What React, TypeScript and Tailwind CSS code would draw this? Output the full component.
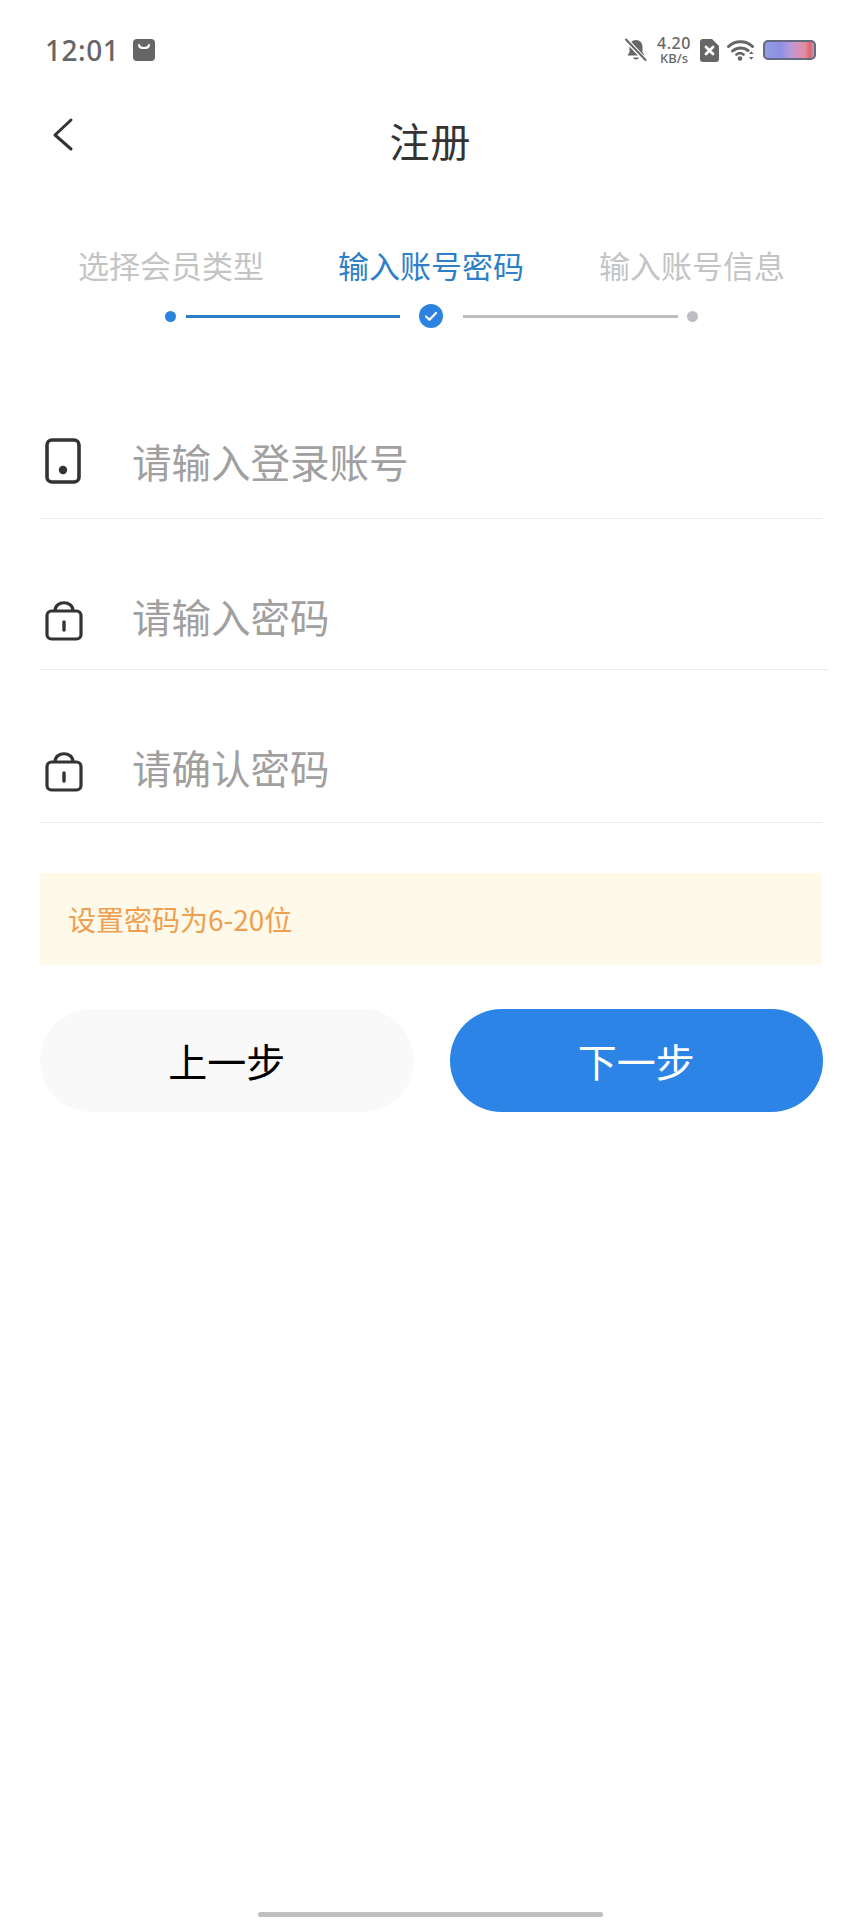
import React from "react";

const CJK = "font-['Noto_Sans_CJK_SC','Noto_Sans',sans-serif]";

const Bag = () => (
  <svg width="22" height="22" viewBox="0 0 22 22">
    <rect width="22" height="22" rx="4" fill="#666" />
    <path d="M6 6c.5 4 9.5 4 10 0" fill="none" stroke="#fff" strokeWidth="2.2" strokeLinecap="round" />
  </svg>
);

const BellOff = () => (
  <svg width="22" height="24" viewBox="0 0 22 24">
    <path d="M11 2c4 0 6.5 3 6.5 7v5l2 3.5H2.5L4.500 14V9c0-4 2.500-7 6.500-7z" fill="#666" />
    <path d="M8 19.500c.5 2.500 5.500 2.500 6 0z" fill="#666" />
    <path d="M1.500 2L20 22" stroke="#fff" strokeWidth="4.500" />
    <path d="M1 1.500L20.500 22" stroke="#666" strokeWidth="2" strokeLinecap="round" />
  </svg>
);

const SimOff = () => (
  <svg width="19" height="23" viewBox="0 0 19 23">
    <path d="M3 0h9l7 7v13a3 3 0 0 1-3 3H3a3 3 0 0 1-3-3V3a3 3 0 0 1 3-3z" fill="#666" />
    <path d="M6 8l7 7M13 8l-7 7" stroke="#fff" strokeWidth="2.800" strokeLinecap="round" />
  </svg>
);

const Wifi = () => (
  <svg width="28" height="22" viewBox="0 0 28 22">
    <path d="M1.500 7.500C8 1 19 1 25.500 7.500" fill="none" stroke="#666" strokeWidth="3" strokeLinecap="round" />
    <path d="M5.500 12c4.500-4 11.500-4 15.500-.5" fill="none" stroke="#666" strokeWidth="3" strokeLinecap="round" />
    <path d="M9.500 15.500c2-1.500 5-1.500 7 0" fill="none" stroke="#666" strokeWidth="2.800" strokeLinecap="round" />
    <circle cx="13" cy="19.500" r="2.300" fill="#666" />
    <path d="M22 15l2.300-2.800 2.300 2.800zM22 18l2.300 2.800 2.300-2.800z" fill="#666" />
  </svg>
);

const Battery = () => (
  <div className="w-[53px] h-[20px] rounded-[5px] border-[2px] border-[#666a80] bg-[linear-gradient(90deg,#8f9ee0_0%,#8d8fe6_30%,#b79ad8_52%,#df8fb4_72%,#dc8f9c_82%,#e0606e_92%,#b4a0b8_100%)]" />
);

const PhoneIcon = () => (
  <svg width="36" height="46" viewBox="0 0 36 46">
    <rect x="2" y="2" width="32" height="42" rx="5" fill="none" stroke="#333" strokeWidth="3.600" />
    <circle cx="18" cy="32" r="4.200" fill="#333" />
  </svg>
);

const LockIcon = () => (
  <svg width="38" height="40" viewBox="0 0 38 40">
    <rect x="2" y="10" width="34" height="28" rx="4.500" fill="none" stroke="#333" strokeWidth="3.200" />
    <path d="M10 10c0-11 18-11 18 0" fill="none" stroke="#333" strokeWidth="3.200" />
    <path d="M19 21v8" stroke="#333" strokeWidth="3.400" strokeLinecap="round" />
  </svg>
);

const StepCheck = () => (
  <svg width="24" height="24" viewBox="0 0 24 24">
    <circle cx="12" cy="12" r="12" fill="#2b82e0" />
    <path d="M7 12.500l3.500 3.300L17 9" fill="none" stroke="#fff" strokeWidth="2.200" strokeLinecap="round" strokeLinejoin="round" />
  </svg>
);

const fields = [
  { icon: <PhoneIcon />, label: "请输入登录账号", rowClass: "h-[150px] w-[782px] pb-[29px]", iconBox: "mb-[5px]" },
  { icon: <LockIcon />, label: "请输入密码", rowClass: "h-[151px] w-[788px] pb-[25px]", iconBox: "mb-[3px]" },
  { icon: <LockIcon />, label: "请确认密码", rowClass: "h-[153px] w-[782px] pb-[27px]", iconBox: "mb-[3px]" },
];

export default function App() {
  return (
    <div className={`w-[861px] h-[1920px] bg-white flex flex-col ${CJK}`}>
      {/* Status bar */}
      <div className="h-[100px] pl-[45px] pr-[45px] flex items-center justify-between">
        <div className="flex items-center gap-[14px]">
          <span className="text-[28px] leading-[32px] font-medium tracking-[0.5px] text-[#666] font-['Noto_Sans',sans-serif]">12:01</span>
          <Bag />
        </div>
        <div className="flex items-center">
          <BellOff />
          <div className="ml-[8px] w-[38px] flex flex-col items-center text-[#666] font-['Noto_Sans',sans-serif] font-medium">
            <span className="text-[16px] leading-[17px] tracking-[0.5px]">4.20</span>
            <span className="text-[13px] leading-[13px]">KB/s</span>
          </div>
          <div className="ml-[7px]"><SimOff /></div>
          <div className="ml-[8px]"><Wifi /></div>
          <div className="ml-[8px]"><Battery /></div>
        </div>
      </div>

      {/* Title bar */}
      <div className="relative h-[80px] flex items-center justify-center">
        <svg className="absolute left-[50px] top-[16px]" width="26" height="36" viewBox="0 0 26 36">
          <path d="M21 4L5 19l16 14" fill="none" stroke="#333" strokeWidth="3" strokeLinecap="round" strokeLinejoin="round" />
        </svg>
        <h1 className="text-[40px] leading-[56px] font-normal tracking-[1px] text-[#333]">注册</h1>
      </div>

      {/* Step labels */}
      <div className="mt-[65px] pl-[78px] flex text-[31px] leading-[40px] whitespace-nowrap">
        <span className="w-[260px] text-[#c4c4c4]">选择会员类型</span>
        <span className="w-[261px] text-[#2f7fc8]">输入账号密码</span>
        <span className="text-[#c4c4c4]">输入账号信息</span>
      </div>

      {/* Step progress */}
      <div className="mt-[19px] h-[24px] pl-[165px] flex items-center">
        <div className="w-[11px] h-[11px] rounded-full bg-[#2b82e0]" />
        <div className="ml-[10px] w-[214px] h-[3px] bg-[#2f7dc2]" />
        <div className="ml-[19px]"><StepCheck /></div>
        <div className="ml-[20px] w-[215px] h-[3px] bg-[#bdbdbd]" />
        <div className="ml-[9px] w-[11px] h-[11px] rounded-full bg-[#bdbdc4]" />
      </div>

      {/* Account fields */}
      <div className="mt-[41px] pl-[40px] flex flex-col">
        {fields.map((field) => (
          <div key={field.label} className={`${field.rowClass} flex items-end border-b-[1px] border-[#eaeaea]`}>
            <div className={`w-[92px] pl-[5px] flex ${field.iconBox}`}>{field.icon}</div>
            <span className="text-[39.500px] leading-[56px] text-[#a0a0a0]">{field.label}</span>
          </div>
        ))}
      </div>

      {/* Password hint */}
      <div className="mt-[50px] ml-[40px] w-[782px] h-[92px] pl-[28px] flex items-center bg-[#fff9ea]">
        <span className="text-[28px] leading-[40px] text-[#ee9f50]">设置密码为6-20位</span>
      </div>

      {/* Actions */}
      <div className="mt-[44px] ml-[40px] w-[783px] flex gap-[36px]">
        <button className="flex-1 h-[103px] rounded-full bg-[#f9f9f9] text-[39px] text-black">上一步</button>
        <button className="flex-1 h-[103px] rounded-full bg-[#2b84e6] text-[39px] text-white">下一步</button>
      </div>

      {/* Home indicator */}
      <div className="mt-auto mb-[3px] mx-auto w-[345px] h-[5px] rounded-full bg-[#bfbfbf]" />
    </div>
  );
}
